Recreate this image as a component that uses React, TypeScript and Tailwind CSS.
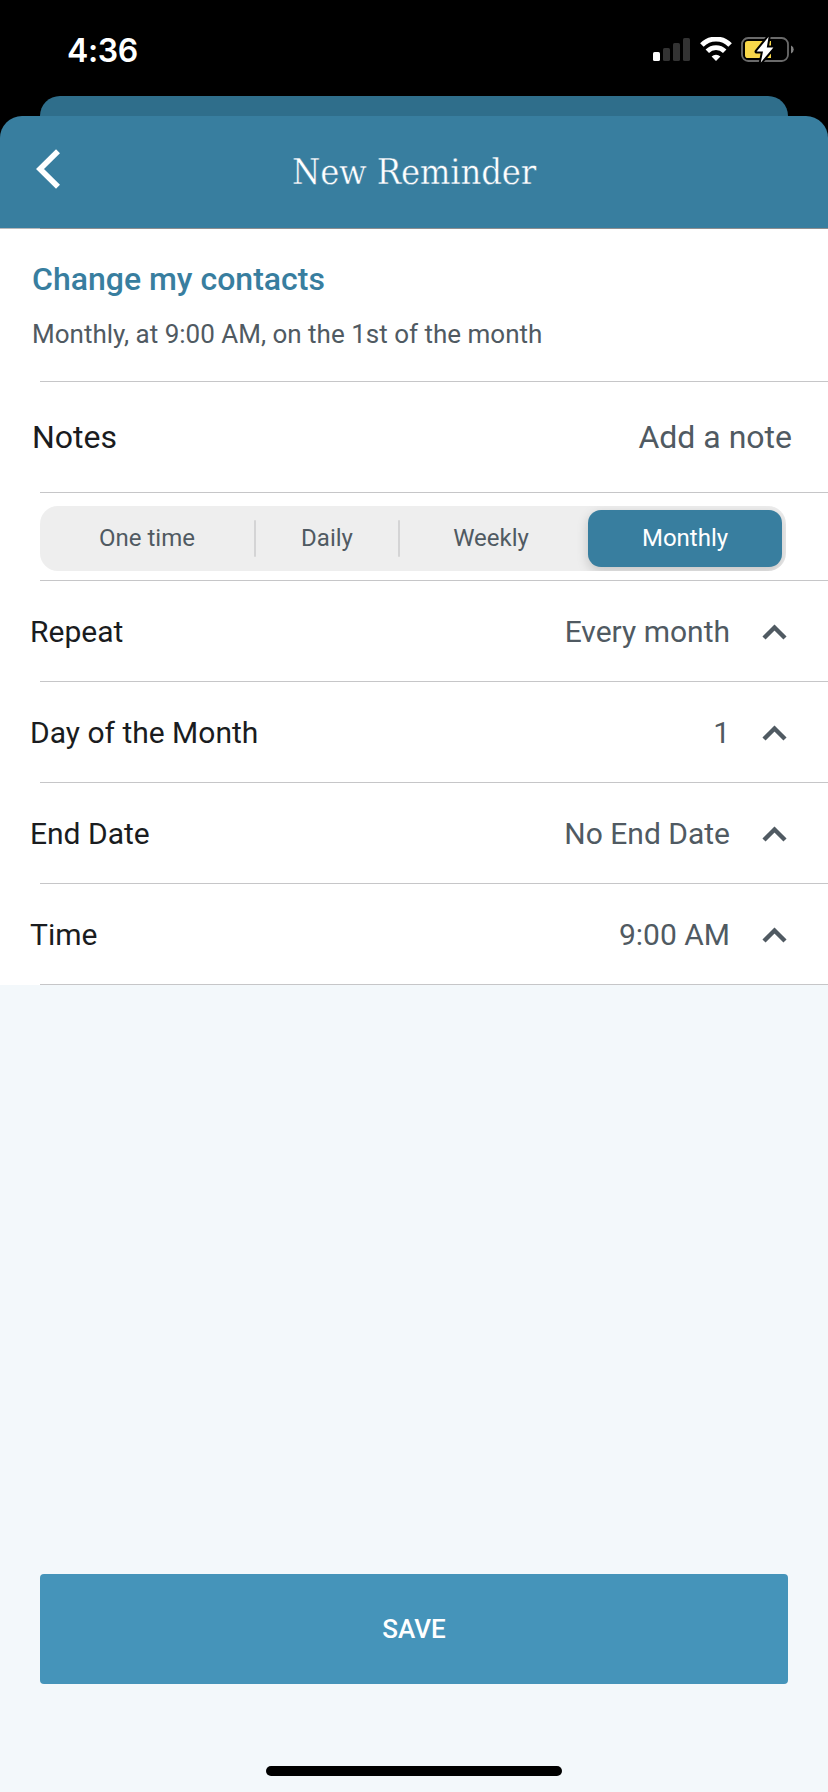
import React from "react";

function SignalIcon() {
  return (
    <svg width="38" height="24" viewBox="0 0 38 24">
      <rect x="0" y="14" width="7" height="9" rx="1.6" fill="#fff" />
      <rect x="10" y="10" width="7" height="13" rx="1.6" fill="#333" />
      <rect x="20" y="5" width="7" height="18" rx="1.6" fill="#333" />
      <rect x="30" y="0" width="7" height="23" rx="1.6" fill="#333" />
    </svg>
  );
}

function WifiIcon() {
  return (
    <svg width="32" height="24" viewBox="0 0 32 24" fill="none">
      <path d="M1.900 8A19.600 19.600 0 0 1 30.100 8" stroke="#fff" strokeWidth="4.900" />
      <path d="M7.300 14.200A12.200 12.200 0 0 1 24.700 14.200" stroke="#fff" strokeWidth="4.800" />
      <path d="M16 24 11.600 19.500A6.200 6.200 0 0 1 20.400 19.500Z" fill="#fff" />
    </svg>
  );
}

function BatteryIcon() {
  return (
    <svg width="54" height="28" viewBox="0 0 54 28">
      <rect x="1" y="2" width="46" height="23" rx="6.2" fill="none" stroke="#6a6a6a" strokeWidth="1.8" />
      <path d="M50 9.6v8a4.3 4.3 0 0 0 0-8Z" fill="#808080" />
      <path d="M6.8 5H30v17H6.8A2.8 2.8 0 0 1 4 19.200V7.800A2.8 2.8 0 0 1 6.800 5Z" fill="#f8d74a" />
      <path
        d="M27.600.800 15.600 15.600h6.400L19.800 26.400 32.400 11.600h-6.600Z"
        fill="#fff"
        stroke="#000"
        strokeWidth="4"
        strokeLinejoin="round"
        paintOrder="stroke"
      />
    </svg>
  );
}

function StatusBar() {
  return (
    <div className="flex h-24 items-start justify-between bg-black pl-[67px] pr-[33px] text-white">
      <span className="pt-[31px] font-['Inter',sans-serif] text-[32px] leading-10 font-semibold tracking-[-0.4px]">4:36</span>
      <div className="flex pt-[38px]">
        <SignalIcon />
        <div className="ml-[9px] -mt-px">
          <WifiIcon />
        </div>
        <div className="ml-[9px] -mt-[2px]">
          <BatteryIcon />
        </div>
      </div>
    </div>
  );
}

function Header() {
  return (
    <header className="bg-black">
      <div className="mx-10 -mb-5 h-10 rounded-t-[20px] bg-[#2f6e8b]" />
      <div className="relative flex h-[112px] items-center rounded-t-[22px] bg-[#387e9f]">
        <button aria-label="Back" className="ml-9 pb-[7px]">
          <svg width="26" height="42" viewBox="0 0 26 42" fill="none">
            <path d="M22 3.200 4 21 22 38.800" stroke="#fff" strokeWidth="5.600" />
          </svg>
        </button>
        <h1 className="mr-[62px] flex-1 text-center font-['DejaVu_Serif_Condensed','DejaVu_Serif',serif] text-[36px] leading-10 tracking-[-0.2px] text-white [-webkit-text-stroke:0.4px_#387e9f]">
          New Reminder
        </h1>
      </div>
    </header>
  );
}

const segments = [
  { label: "One time", box: "w-[214px]" },
  { label: "Daily", box: "w-[142px]" },
  { label: "Weekly", box: "w-[182px] mr-0.5" },
];

const rows = [
  { label: "Repeat", value: "Every month" },
  { label: "Day of the Month", value: "1" },
  { label: "End Date", value: "No End Date" },
  { label: "Time", value: "9:00 AM" },
];

function Divider() {
  return <div className="ml-10 h-px bg-[#c6c6c8]" />;
}

function FrequencyTabs() {
  return (
    <div className="mt-[13px] mb-[9px] ml-10 flex h-[65px] w-[746px] items-center overflow-hidden rounded-[18px] bg-[#eeeeee] text-2xl text-[#505a62]">
      {segments.map((s, i) => (
        <React.Fragment key={s.label}>
          {i > 0 && <div className="h-[37px] w-0.5 rounded-full bg-[#d4d4d5]" />}
          <button className={`${s.box} text-center leading-8 pb-px`}>{s.label}</button>
        </React.Fragment>
      ))}
      <button className="ml-1 h-[57px] w-[194px] rounded-[13px] bg-[#387e9f] pb-px text-center text-white shadow-[0_4px_12px_rgba(0,0,0,0.18)]">
        Monthly
      </button>
    </div>
  );
}

export default function App() {
  return (
    <div className="flex h-[1792px] w-[828px] flex-col bg-[#f3f8fb] font-['Roboto',sans-serif] text-[#1a1c20]">
      <StatusBar />
      <Header />
      <main className="bg-white">
        <div className="flex h-px bg-[#b8b8ba]">
          <div className="ml-10 flex-1 bg-[#8e8e90]" />
        </div>
        <section className="h-[152px] pt-[30px] pl-8">
          <h2 className="text-[32px] leading-10 font-medium text-[#387e9f]">Change my contacts</h2>
          <p className="mt-[19px] text-[26px] leading-8 text-[#505a62]">Monthly, at 9:00 AM, on the 1st of the month</p>
        </section>
        <Divider />
        <div className="flex h-[110px] items-center justify-between pr-9 pl-8 text-[32px]">
          <span>Notes</span>
          <span className="text-[#505a62]">Add a note</span>
        </div>
        <Divider />
        <FrequencyTabs />
        <Divider />
        {rows.map((r) => (
          <React.Fragment key={r.label}>
            <div className="flex h-[100px] items-center pr-[41px] pl-[30px] text-[30px]">
              <span className="flex-1">{r.label}</span>
              <span className="text-[#505a62]">{r.value}</span>
              <svg className="ml-8" width="25" height="18" viewBox="0 0 25 18" fill="none">
                <path d="M2 16 12.500 5.500 23 16" stroke="#505a62" strokeWidth="4.400" />
              </svg>
            </div>
            <Divider />
          </React.Fragment>
        ))}
      </main>
      <div className="flex flex-1 flex-col items-center justify-end pb-4">
        <button className="h-[110px] w-[748px] rounded-[4px] bg-[#4594ba] text-[26px] font-medium text-white">SAVE</button>
        <div className="mt-[82px] h-2.5 w-[296px] rounded-full bg-black" />
      </div>
    </div>
  );
}
